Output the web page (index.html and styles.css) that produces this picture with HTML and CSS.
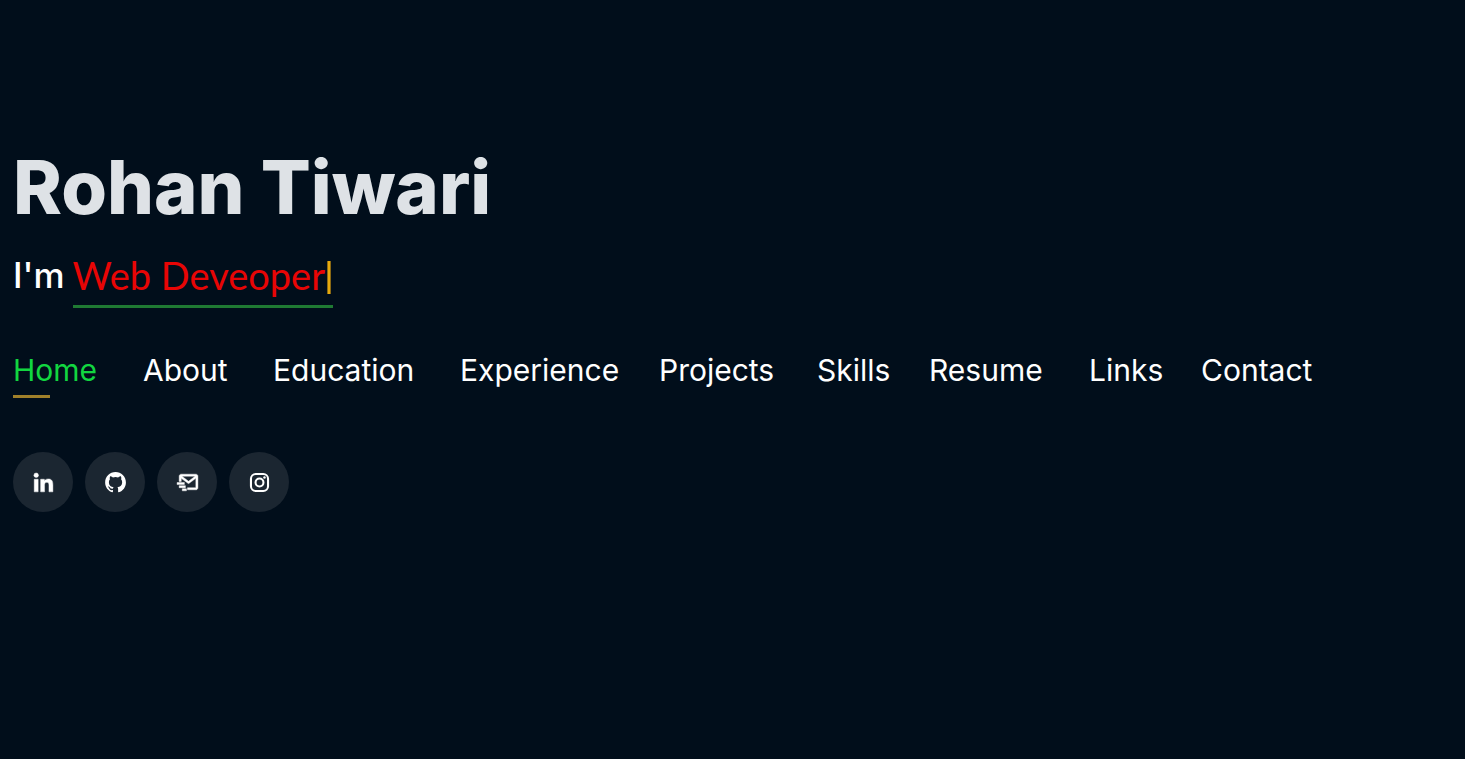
FILE: index.html
```html
<!DOCTYPE html>
<html lang="en">
<head>
<meta charset="utf-8">
<meta name="viewport" content="width=device-width, initial-scale=1">
<title>Rohan Tiwari</title>
<link rel="stylesheet" href="styles.css">
</head>
<body>
<header class="hero">
  <h1 class="hero-name">Rohan Tiwari</h1>
  <h2 class="hero-role"><span>I'm</span> <span class="typed">Web Deveoper<span class="cursor"></span></span></h2>
  <nav aria-label="Main">
    <ul class="nav">
      <li><a class="nav-link active" href="#home">Home</a></li>
      <li><a class="nav-link" href="#about">About</a></li>
      <li><a class="nav-link" href="#education">Education</a></li>
      <li><a class="nav-link" href="#experience">Experience</a></li>
      <li><a class="nav-link" href="#projects">Projects</a></li>
      <li><a class="nav-link" href="#skills">Skills</a></li>
      <li><a class="nav-link" href="#resume">Resume</a></li>
      <li><a class="nav-link" href="#links">Links</a></li>
      <li><a class="nav-link" href="#contact">Contact</a></li>
    </ul>
  </nav>
  <div class="social">
    <a class="social-link" href="#linkedin" aria-label="LinkedIn"><svg class="icon bold" viewBox="0 0 24 24"><circle cx="4.983" cy="5.009" r="2.188"/><path d="M9.237 8.855v12.139h3.769v-6.003c0-1.584.298-3.118 2.262-3.118 1.937 0 1.961 1.811 1.961 3.218v5.904H21v-6.657c0-3.27-.704-5.783-4.526-5.783-1.835 0-3.065 1.007-3.568 1.96h-.051v-1.66H9.237zm-6.142 0H6.87v12.139H3.095z"/></svg></a>
    <a class="social-link" href="#github" aria-label="GitHub"><svg class="icon" viewBox="0 0 24 24"><path d="M12.026 2c-5.509 0-9.974 4.465-9.974 9.974 0 4.406 2.857 8.145 6.821 9.465.499.09.679-.217.679-.481 0-.237-.008-.865-.011-1.696-2.775.602-3.361-1.338-3.361-1.338-.452-1.152-1.107-1.459-1.107-1.459-.905-.619.069-.605.069-.605 1.002.07 1.527 1.028 1.527 1.028.89 1.524 2.336 1.084 2.902.829.091-.645.351-1.085.635-1.334-2.214-.251-4.542-1.107-4.542-4.93 0-1.087.389-1.979 1.024-2.675-.101-.253-.446-1.268.099-2.64 0 0 .837-.269 2.742 1.021a9.582 9.582 0 0 1 2.496-.336 9.554 9.554 0 0 1 2.496.336c1.906-1.291 2.742-1.021 2.742-1.021.545 1.372.203 2.387.099 2.64.64.696 1.024 1.587 1.024 2.675 0 3.833-2.33 4.675-4.552 4.922.355.308.675.916.675 1.846 0 1.334-.012 2.41-.012 2.737 0 .267.178.577.687.479C19.146 20.115 22 16.379 22 11.974 22 6.465 17.535 2 12.026 2z"/></svg></a>
    <a class="social-link" href="#mail" aria-label="Email"><svg class="icon bold" viewBox="0 0 24 24"><path d="M20 4H6c-1.103 0-2 .897-2 2v5h2V8l6.4 4.8a1.001 1.001 0 0 0 1.2 0L20 8v9h-8v2h8c1.103 0 2-.897 2-2V6c0-1.103-.897-2-2-2zm-7 6.75L6.666 6h12.668L13 10.75z"/><path d="M2 12h7v2H2zm2 3h6v2H4zm3 3h4v2H7z"/></svg></a>
    <a class="social-link" href="#instagram" aria-label="Instagram"><svg class="icon" viewBox="0 0 24 24"><rect class="line" x="3.8" y="3.8" width="16.4" height="16.4" rx="4.6"/><circle class="line" cx="12" cy="12" r="3.8"/><circle cx="16.8" cy="7.2" r="1.2"/></svg></a>
  </div>
</header>
</body>
</html>
```
FILE: styles.css
```css
* {
  box-sizing: border-box;
}

body {
  margin: 0;
  background: #010e1b;
  color: #fff;
  font-family: Inter, "Open Sans", sans-serif;
}

.hero {
  display: flex;
  flex-direction: column;
  justify-content: center;
  min-height: 100vh;
  padding: 0 12px 102px 13px;
}

.hero-name {
  margin: 0;
  color: #dee2e6;
  font-size: 74px;
  font-weight: 800;
  line-height: 84px;
}

.hero-role {
  display: flex;
  flex-wrap: wrap;
  gap: 8px;
  margin: 24px 0 0;
  font-size: 35px;
  font-weight: 500;
  line-height: 44px;
}

.typed {
  padding-bottom: 8px;
  border-bottom: 3px solid #1f7a33;
  color: #e80505;
  font-family: Lato, sans-serif;
  font-size: 38px;
  font-weight: 400;
}

.cursor {
  display: inline-block;
  width: 4px;
  height: 33px;
  margin: 0 2px;
  border: solid #8a6914;
  border-width: 0 1px;
  background: #e6a90c;
  vertical-align: -4px;
}

.nav {
  display: grid;
  grid-template-columns: 130fr 130fr 187fr 199fr 158fr 112fr 160fr 112fr 252fr;
  margin: 40px 0 0;
  padding: 0;
  list-style: none;
}

.nav-link {
  display: block;
  color: #fff;
  font-size: 30px;
  line-height: 44px;
  text-decoration: none;
}

.nav-link::after {
  content: "";
  display: block;
  width: 37px;
  height: 3px;
  margin-top: 3px;
}

.nav-link.active {
  color: #12d640;
}

.nav-link.active::after {
  background: #a0802a;
}

.social {
  display: flex;
  gap: 12px;
  margin-top: 54px;
}

.social-link {
  display: flex;
  align-items: center;
  justify-content: center;
  width: 60px;
  height: 60px;
  border-radius: 50%;
  background: #1b2631;
  color: #fff;
}

.icon {
  width: 25px;
  height: 25px;
  fill: currentColor;
}

.bold {
  stroke: currentColor;
  stroke-width: 0.4;
}

.line {
  fill: none;
  stroke: currentColor;
  stroke-width: 2;
}

@media (max-width: 1360px) {
  .nav {
    display: flex;
    flex-wrap: wrap;
    gap: 16px 44px;
  }
}
```
